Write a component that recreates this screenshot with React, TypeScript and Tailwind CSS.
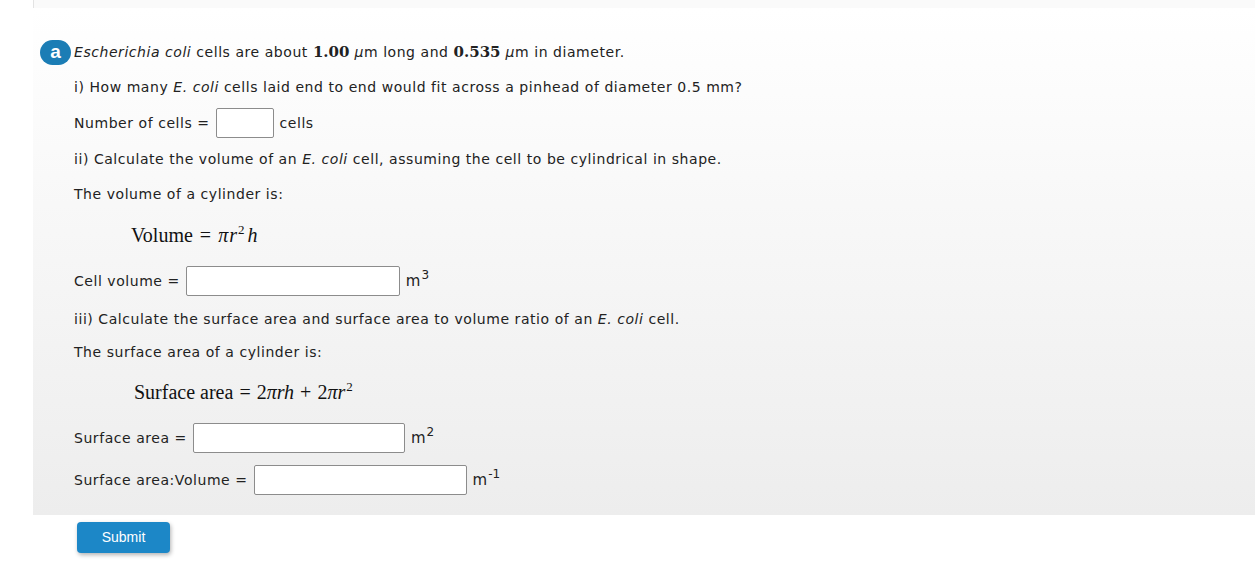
import React from 'react';

const Box = ({ w }: { w: string }) => (
  <input type="text" className={`${w} h-[30px] border border-[#8c8c8c] rounded-[2px] bg-white mx-[6px] outline-none`} />
);

const Unit = ({ sup }: { sup: string }) => (
  <span className="text-[15px] tracking-normal">
    m<sup className="text-[12px] -top-[7px] ml-[1px]">{sup}</sup>
  </span>
);

const App: React.FC = () => {
  return (
    <div className="min-h-screen bg-white text-[#222] text-[14px] tracking-[0.55px]" style={{ fontFamily: '"DejaVu Sans", Verdana, sans-serif' }}>
      <div className="ml-[33px]">
        <div className="h-[8px] bg-[#fafafa] border-l border-[#e3e3e3]"></div>
        <div className="bg-gradient-to-b from-white to-[#ededed] pt-[27px] pb-[16px]">
          <div className="h-[35px] flex items-center pl-[7px]">
            <span className="w-[31px] h-[25px] rounded-full bg-[#1b7db5] text-white font-bold text-[19px] flex items-center justify-center leading-none pb-[2px] mr-[3px] tracking-normal" style={{ fontFamily: '"Liberation Sans", Arial, sans-serif' }}>
              a
            </span>
            <span>
              <i>Escherichia coli</i> cells are about{' '}
              <b className="font-bold text-[15px] tracking-normal" style={{ fontFamily: '"DejaVu Serif", serif' }}>1.00</b> <i>μ</i>m long and{' '}
              <b className="font-bold text-[15px] tracking-normal" style={{ fontFamily: '"DejaVu Serif", serif' }}>0.535</b> <i>μ</i>m in diameter.
            </span>
          </div>
          <div className="pl-[41px]">
            <div className="h-[35px] flex items-center">
              <span>i) How many <i>E. coli</i> cells laid end to end would fit across a pinhead of diameter 0.5 mm?</span>
            </div>
            <div className="h-[36px] flex items-center">
              <span>Number of cells =</span>
              <Box w="w-[58px]" />
              <span>cells</span>
            </div>
            <div className="h-[36px] flex items-center">
              <span>ii) Calculate the volume of an <i>E. coli</i> cell, assuming the cell to be cylindrical in shape.</span>
            </div>
            <div className="h-[34px] flex items-center">
              <span>The volume of a cylinder is:</span>
            </div>
            <div className="h-[48px] flex items-center pl-[57px] text-[20px] text-[#111] tracking-normal" style={{ fontFamily: '"Liberation Serif", "Times New Roman", serif' }}>
              <span>Volume</span>
              <span className="mx-[7px]">=</span>
              <i>π</i>
              <i className="ml-[1px]">r</i>
              <sup className="text-[13px] -top-[5px] ml-[1px]">2</sup>
              <i className="ml-[3px]">h</i>
            </div>
            <div className="h-[44px] flex items-center">
              <span>Cell volume =</span>
              <Box w="w-[214px]" />
              <Unit sup="3" />
            </div>
            <div className="h-[32px] flex items-center">
              <span>iii) Calculate the surface area and surface area to volume ratio of an <i>E. coli</i> cell.</span>
            </div>
            <div className="h-[34px] flex items-center">
              <span>The surface area of a cylinder is:</span>
            </div>
            <div className="h-[46px] flex items-center pl-[60px] text-[20px] text-[#111] tracking-normal" style={{ fontFamily: '"Liberation Serif", "Times New Roman", serif' }}>
              <span>Surface area</span>
              <span className="mx-[6px]">=</span>
              <span>2</span>
              <i>πrh</i>
              <span className="mx-[6px]">+</span>
              <span>2</span>
              <i>πr</i>
              <sup className="text-[13px] -top-[5px] ml-[1px]">2</sup>
            </div>
            <div className="h-[46px] flex items-center">
              <span>Surface area =</span>
              <Box w="w-[212px]" />
              <Unit sup="2" />
            </div>
            <div className="h-[38px] flex items-center">
              <span>Surface area:Volume =</span>
              <Box w="w-[213px]" />
              <Unit sup="-1" />
            </div>
          </div>
        </div>
      </div>
      <div className="ml-[77px] mt-[7px]">
        <button
          className="w-[93px] h-[31px] rounded-[4px] bg-[#1c87c7] text-white text-[14px] shadow-[1px_2px_4px_rgba(0,0,0,0.3)] tracking-normal"
          style={{ fontFamily: '"Liberation Sans", Arial, sans-serif' }}
        >
          Submit
        </button>
      </div>
    </div>
  );
};

export default App;
